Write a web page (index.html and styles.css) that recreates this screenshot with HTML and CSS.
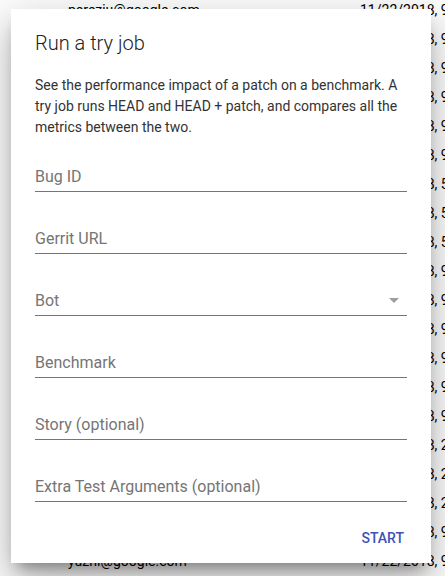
FILE: index.html
```html
<!DOCTYPE html>
<html>
<head>
<meta charset="utf-8">
<link rel="stylesheet" href="styles.css">
</head>
<body>
<div class="table">
  <div class="row"><span class="email">perezju@google.com</span><span class="date">11/22/2018, 9:47:12 AM</span></div>
  <div class="row"><span class="email">perezju@google.com</span><span class="date">11/22/2018, 9:45:01 AM</span></div>
  <div class="row"><span class="email">perezju@google.com</span><span class="date">11/22/2018, 9:43:30 AM</span></div>
  <div class="row"><span class="email">perezju@google.com</span><span class="date">11/22/2018, 9:41:12 AM</span></div>
  <div class="row"><span class="email">perezju@google.com</span><span class="date">11/22/2018, 9:39:55 AM</span></div>
  <div class="row"><span class="email">perezju@google.com</span><span class="date">11/22/2018, 9:37:21 AM</span></div>
  <div class="row"><span class="email">perezju@google.com</span><span class="date">11/22/2018, 5:52:40 AM</span></div>
  <div class="row"><span class="email">perezju@google.com</span><span class="date">11/22/2018, 5:50:03 AM</span></div>
  <div class="row"><span class="email">perezju@google.com</span><span class="date">11/22/2018, 5:48:17 AM</span></div>
  <div class="row"><span class="email">perezju@google.com</span><span class="date">11/22/2018, 9:31:44 AM</span></div>
  <div class="row"><span class="email">perezju@google.com</span><span class="date">11/22/2018, 9:29:10 AM</span></div>
  <div class="row"><span class="email">perezju@google.com</span><span class="date">11/22/2018, 9:27:38 AM</span></div>
  <div class="row"><span class="email">perezju@google.com</span><span class="date">11/22/2018, 9:25:02 AM</span></div>
  <div class="row"><span class="email">perezju@google.com</span><span class="date">11/22/2018, 9:23:49 AM</span></div>
  <div class="row"><span class="email">perezju@google.com</span><span class="date">11/22/2018, 9:21:15 AM</span></div>
  <div class="row"><span class="email">perezju@google.com</span><span class="date">11/22/2018, 2:19:33 AM</span></div>
  <div class="row"><span class="email">perezju@google.com</span><span class="date">11/22/2018, 2:17:06 AM</span></div>
  <div class="row"><span class="email">perezju@google.com</span><span class="date">11/22/2018, 2:15:41 AM</span></div>
  <div class="row"><span class="email">perezju@google.com</span><span class="date">11/22/2018, 9:13:27 AM</span></div>
  <div class="row"><span class="email">yuzhi@google.com</span><span class="date">11/22/2018, 9:11:58 AM</span></div>
</div>

<div class="dialog">
  <h2 class="title">Run a try job</h2>
  <p class="desc">See the performance impact of a patch on a benchmark. A try job runs HEAD and HEAD + patch, and compares all the metrics between the two.</p>
  <div class="fields">
    <div class="field"><span class="label">Bug ID</span></div>
    <div class="field"><span class="label">Gerrit URL</span></div>
    <div class="field"><span class="label">Bot</span>
      <svg class="arrow" width="10" height="5" viewBox="0 0 10 5"><path d="M0 0h10L5 5z" fill="#9e9e9e"/></svg>
    </div>
    <div class="field"><span class="label">Benchmark</span></div>
    <div class="field"><span class="label">Story (optional)</span></div>
    <div class="field"><span class="label">Extra Test Arguments (optional)</span></div>
  </div>
  <div class="actions"><span class="button">Start</span></div>
</div>
</body>
</html>
```
FILE: styles.css
```css
html, body {
  margin: 0;
  padding: 0;
  background: #fff;
  overflow: hidden;
  height: 576px;
}
body {
  font-family: Roboto, "Liberation Sans", sans-serif;
}
.table {
  display: flex;
  flex-direction: column;
}
.row {
  display: flex;
  font-size: 14px;
  line-height: 20px;
  padding-bottom: 9px;
  color: #000;
  white-space: nowrap;
}
.email {
  padding-left: 68px;
  width: 292px;
  flex: none;
}
.date {
  flex: none;
}
.dialog {
  position: absolute;
  left: 11px;
  top: 9px;
  width: 420px;
  height: 554px;
  box-sizing: border-box;
  background: #fff;
  padding: 0 24px;
  display: flex;
  flex-direction: column;
  box-shadow: 0 24px 38px 3px rgba(0,0,0,0.14), 0 9px 46px 8px rgba(0,0,0,0.12), 0 11px 15px -7px rgba(0,0,0,0.4);
}
.title {
  margin: 20px 0 0;
  font-size: 20px;
  line-height: 28px;
  font-weight: 300;
  color: #212121;
}
.desc {
  margin: 18px 0 0;
  font-size: 14px;
  line-height: 21px;
  color: #333;
}
.fields {
  display: flex;
  flex-direction: column;
  gap: 35px;
  margin-top: 27px;
}
.field {
  display: flex;
  align-items: center;
  justify-content: space-between;
  padding-bottom: 2px;
  border-bottom: 1px solid #757575;
}
.label {
  font-size: 16px;
  line-height: 24px;
  color: #757575;
}
.arrow {
  margin-right: 8px;
  margin-top: -2px;
}
.actions {
  display: flex;
  justify-content: flex-end;
  margin: 18px -5px 0 0;
}
.button {
  padding: 8px;
  font-size: 14px;
  line-height: 20px;
  font-weight: 500;
  text-transform: uppercase;
  color: #3f51b5;
}
```
